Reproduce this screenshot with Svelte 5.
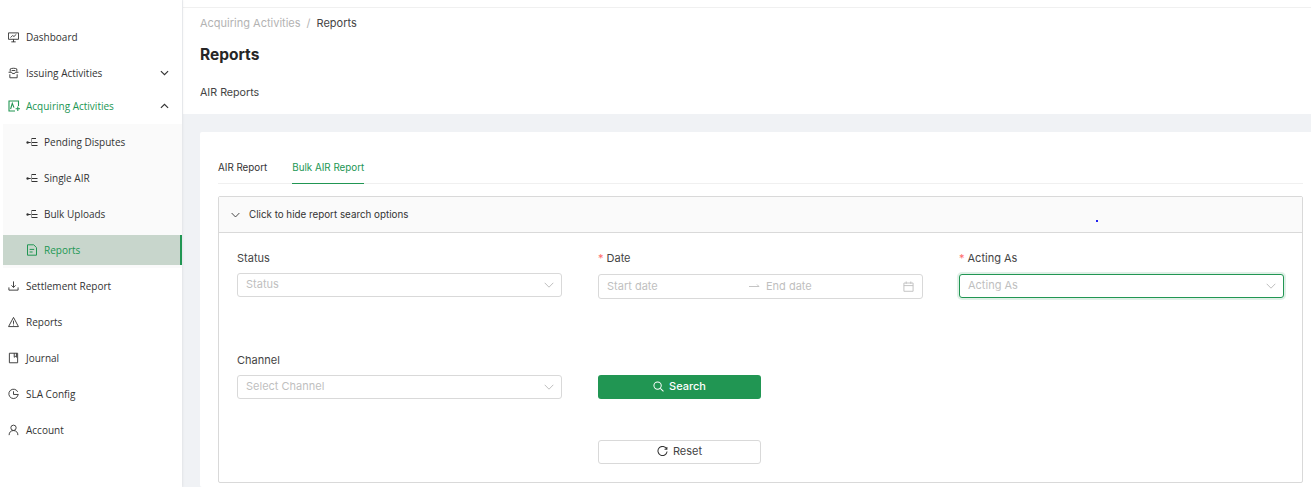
<script>
  const top = [
    { label: 'Settlement Report', icon: 'download' },
    { label: 'Reports', icon: 'warning' },
    { label: 'Journal', icon: 'book' },
    { label: 'SLA Config', icon: 'clock' },
    { label: 'Account', icon: 'user' }
  ];
  const subs = ['Pending Disputes', 'Single AIR', 'Bulk Uploads'];
</script>

{#snippet chevron(up)}
  <svg class="chev" viewBox="0 0 10 6" width="9" height="6">
    <path d={up ? 'M1 5 5 1.2 9 5' : 'M1 1 5 4.8 9 1'} fill="none" stroke="#333" stroke-width="1.3" />
  </svg>
{/snippet}

{#snippet caret()}
  <svg class="caret" viewBox="0 0 10 6" width="10" height="6">
    <path d="M.7.8 5 5.2 9.3.8" fill="none" stroke="#bfbfbf" stroke-width="1" />
  </svg>
{/snippet}

{#snippet navIcon(name)}
  <svg class="ico" viewBox="0 0 12 12" width="11" height="12" fill="none" stroke="currentColor" stroke-width="1">
    {#if name === 'download'}
      <path d="M6 1v6.5M3.8 5.3 6 7.6l2.2-2.3M1 7.5v3h10v-3" />
    {:else if name === 'warning'}
      <path d="M6 1 .6 11h10.8zM6 4.6v3.4M6 8.8v1" />
    {:else if name === 'book'}
      <path d="M1.5.8h9v10.4h-9zM6.8.8v4.4L8 4.2l1.2 1V.8" />
    {:else if name === 'clock'}
      <path d="M10.6 3.6A5.1 5.1 0 1 0 11 7M6 3v3.5h5.6" />
    {:else}
      <circle cx="6" cy="3.6" r="2.9" /><path d="M1.2 11.6c0-3.2 2-5 4.8-5s4.8 1.8 4.8 5" />
    {/if}
  </svg>
{/snippet}

{#snippet subIcon()}
  <svg class="ico" viewBox="0 0 12 12" width="12" height="12" fill="none" stroke="#333" stroke-width="1">
    <path d="M1 6.5h3.5M5.5 2.5h4.5M4.5 6.5h7M5.5 9.5h6" />
    <path d="M5.5 2.5v7" stroke="#999" />
    <circle cx="1.6" cy="6.5" r="1.2" fill="#333" stroke="none" />
  </svg>
{/snippet}

<div class="page">
  <aside class="sidebar">
    <a class="item">
      <svg class="ico" viewBox="0 0 12 12" width="11" height="12" fill="none" stroke="currentColor" stroke-width="1">
        <path d="M.5 1.5h11v7H.5zM6 8.5v3M3.6 11.3h4.8M2.8 6.6l2.2-2.2 1.5 1.1 2.6-2.5" />
      </svg>
      <span>Dashboard</span>
    </a>
    <a class="item">
      <svg class="ico" viewBox="0 0 12 12" width="11" height="12" fill="none" stroke="currentColor" stroke-width="1">
        <path d="M2.4 4.5V1.6C4 .6 8 .6 9.6 1.6v2.9M4 3.3h4M.6 5.2h3.4l.8 1.4h2.4l.8-1.4h3.4M2 7.4v3.8h8V7.4" />
      </svg>
      <span>Issuing Activities</span>
      {@render chevron(false)}
    </a>
    <a class="item open">
      <svg class="ico" viewBox="0 0 12 12" width="12" height="12" fill="none" stroke="currentColor" stroke-width="1.1">
        <path d="M10.5 6V1H1v10h6M2.6 9 4.3 3.4 6 7.6M7.6 8.8h4.4M9.8 6.6v4.4" />
      </svg>
      <span>Acquiring Activities</span>
      {@render chevron(true)}
    </a>
    <div class="submenu">
      {#each subs as s}
        <a class="sub">{@render subIcon()}<span>{s}</span></a>
      {/each}
      <a class="sub selected">
        <svg class="ico" viewBox="0 0 12 12" width="12" height="12" fill="none" stroke="currentColor" stroke-width="1">
          <path d="M1.5.8h6.2l2.8 2.8v7.6h-9zM3.6 5.4h4.6M3.6 8h3" />
        </svg>
        <span>Reports</span>
      </a>
    </div>
    {#each top as t}
      <a class="item">{@render navIcon(t.icon)}<span>{t.label}</span></a>
    {/each}
  </aside>

  <main class="main">
    <div class="topbar"></div>
    <header class="head">
      <nav class="crumbs"><span class="muted">Acquiring Activities</span><span class="sep">/</span><span>Reports</span></nav>
      <h1>Reports</h1>
      <p>AIR Reports</p>
    </header>

    <div class="body">
      <section class="card">
        <div class="tabs">
          <span class="tab">AIR Report</span>
          <span class="tab active">Bulk AIR Report</span>
        </div>

        <div class="collapse">
          <div class="collapse-head">
            <svg viewBox="0 0 10 6" width="9" height="6"><path d="M.7.8 5 5.2 9.3.8" fill="none" stroke="#333" stroke-width="1" /></svg>
            <span>Click to hide report search options</span>
            <i class="dot"></i>
          </div>
          <div class="form">
            <div class="field">
              <label>Status</label>
              <div class="control">Status{@render caret()}</div>
            </div>
            <div class="field">
              <label><b>*</b>Date</label>
              <div class="control date">
                <span class="d1">Start date</span>
                <svg class="arrow" viewBox="0 0 11 5" width="11" height="5"><path d="M0 3.5h10L8 1.5" fill="none" stroke="#c4c4c4" stroke-width="1" /></svg>
                <span class="d2">End date</span>
                <svg class="cal" viewBox="0 0 12 12" width="11" height="11" fill="none" stroke="#bfbfbf" stroke-width="1"><path d="M1 2.2h10v9H1zM1 5h10M3.5.5v2.5M8.5.5v2.5" /></svg>
              </div>
            </div>
            <div class="field">
              <label><b>*</b>Acting As</label>
              <div class="control focus">Acting As{@render caret()}</div>
            </div>

            <div class="field">
              <label>Channel</label>
              <div class="control">Select Channel{@render caret()}</div>
            </div>
            <div class="field btn-cell">
              <button class="primary">
                <svg viewBox="0 0 12 12" width="11" height="11" fill="none" stroke="#fff" stroke-width="1.1"><circle cx="5" cy="5" r="4" /><path d="M8 8l3.4 3.4" /></svg>
                Search
              </button>
            </div>
            <div></div>

            <div></div>
            <div class="field">
              <button class="ghost">
                <svg viewBox="0 0 12 12" width="11" height="11" fill="none" stroke="#333" stroke-width="1.1"><path d="M10.6 3.4A5 5 0 1 0 11 6M10.8 1v2.6H8.2" /></svg>
                Reset
              </button>
            </div>
          </div>
        </div>
      </section>
    </div>
  </main>
</div>

<style>
  :global(body) { margin: 0; background: #f0f2f5; }
  .page {
    display: flex;
    width: 1311px;
    height: 487px;
    overflow: hidden;
    font-family: Inter, "Liberation Sans", sans-serif;
    color: #333;
  }
  .sidebar {
    width: 182px;
    flex: none;
    height: 487px;
    background: #fff;
    padding-top: 19px;
    box-sizing: border-box;
    font-family: "Open Sans", sans-serif;
    font-size: 10px;
    color: #333;
    box-shadow: 1px 0 2px rgba(0, 0, 0, .06);
    position: relative;
  }
  .item {
    display: flex;
    align-items: center;
    height: 36px;
    padding: 0 13px 0 8px;
    gap: 7px;
  }
  .item.open {
    height: 30px;
    color: #219653;
  }
  .item.open .ico { margin-right: -1px; }
  .item span, .sub span { flex: 1; white-space: nowrap; }
  .submenu {
    margin: 3px 0 0 3px;
    background: #fafafa;
    padding-bottom: 3px;
  }
  .sub {
    display: flex;
    align-items: center;
    height: 36px;
    padding-left: 23px;
    gap: 6px;
  }
  .sub.selected {
    height: 30px;
    margin-top: 3px;
    background: #c8d6cc;
    color: #219653;
    border-right: 2px solid #219653;
  }
  .chev { flex: none; }
  .main { flex: 1; min-width: 0; margin-left: 1px; display: flex; flex-direction: column; }
  .topbar { flex: none; height: 7px; background: #fff; border-bottom: 1px solid #f0f0f0; }
  .head {
    flex: none;
    background: #fff;
    height: 106px;
    padding: 0 0 0 17px;
    font-size: 11px;
    box-sizing: border-box;
  }
  .crumbs { padding-top: 8px; line-height: 15px; color: #444; }
  .muted { color: #b3b3b3; }
  .sep { margin: 0 6px; color: #b3b3b3; }
  h1 { margin: 13px 0 0; font-size: 15.5px; line-height: 22px; font-weight: 700; color: #262626; }
  .head p { margin: 19px 0 0; line-height: 16px; color: #444; font-size: 10.7px; }
  .body { flex: none; padding: 18px 0 0 17px; }
  .card {
    background: #fff;
    border-radius: 2px 0 0 2px;
    height: 355px;
    padding: 26px 8px 0 18px;
    box-sizing: border-box;
  }
  .tabs {
    display: flex;
    gap: 25px;
    height: 25px;
    border-bottom: 1px solid #f0f0f0;
    font-size: 9.8px;
  }
  .tab { line-height: 20px; height: 25px; white-space: nowrap; }
  .tab.active { color: #219653; border-bottom: 1px solid #219653; }
  .collapse {
    margin-top: 12px;
    height: 287px;
    box-sizing: border-box;
    border: 1px solid #d9d9d9;
    border-radius: 2px;
  }
  .collapse-head {
    position: relative;
    height: 35px;
    background: #fafafa;
    border-bottom: 1px solid #d9d9d9;
    display: flex;
    align-items: center;
    gap: 9px;
    padding-left: 12px;
    font-size: 9.8px;
    color: #333;
  }
  .dot {
    position: absolute;
    left: 877px;
    top: 23px;
    width: 2px;
    height: 2px;
    background: #2222ee;
  }
  .form {
    display: grid;
    grid-template-columns: repeat(3, 325px);
    grid-template-rows: 102px 88px auto;
    column-gap: 36px;
    padding: 17px 18px 0;
  }
  .field { display: block; }
  label { display: block; height: 23px; font-size: 11px; line-height: 17px; color: #444; }
  label b { color: #ff6b6d; font-weight: 400; margin-right: 3px; font-size: 11px; }
  .control {
    position: relative;
    height: 24px;
    box-sizing: border-box;
    border: 1px solid #d9d9d9;
    border-radius: 3px;
    font-size: 11px;
    line-height: 20px;
    padding-left: 8px;
    color: #bfbfbf;
    background: #fff;
  }
  .caret { position: absolute; right: 7px; top: 8px; }
  .control.date { margin-top: 1px; display: flex; align-items: center; height: 25px; line-height: 20px; padding-bottom: 2px; }
  .d1 { width: 142px; }
  .d2 { margin-left: 6px; }
  .cal { position: absolute; right: 8px; top: 6px; }
  .control.focus {
    margin-top: 1px;
    border-color: #219653;
    box-shadow: 0 0 0 2px rgba(33, 150, 83, .14);
  }
  button {
    display: flex;
    align-items: center;
    justify-content: center;
    gap: 5px;
    width: 163px;
    height: 24px;
    padding: 0 0 2px;
    box-sizing: border-box;
    border-radius: 3px;
    font: inherit;
    font-size: 11px;
  }
  .primary { margin-top: 23px; background: #219653; border: 0; color: #fff; font-weight: 500; }
  .ghost { background: #fff; border: 1px solid #d9d9d9; color: #444; }
</style>
